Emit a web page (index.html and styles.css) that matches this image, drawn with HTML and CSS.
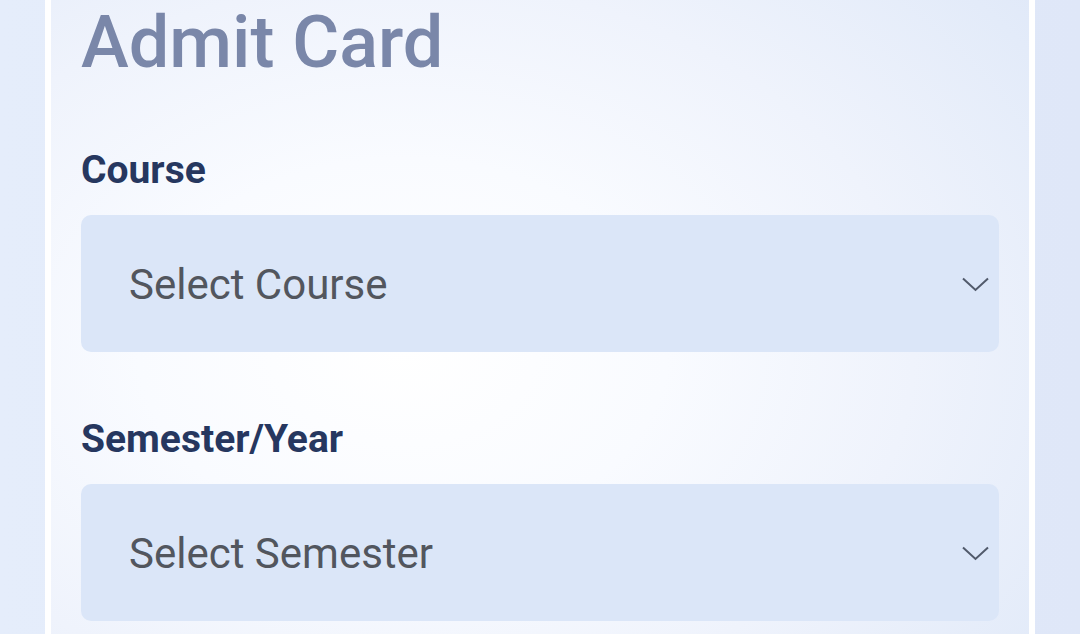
FILE: index.html
```html
<!DOCTYPE html>
<html lang="en">
<head>
<meta charset="utf-8">
<title>Admit Card</title>
<link rel="stylesheet" href="styles.css">
</head>
<body>
<main class="card">
  <h1 class="title">Admit Card</h1>
  <div class="field">
    <label class="label">Course</label>
    <div class="select">
      <span class="placeholder">Select Course</span>
      <svg class="chevron" width="27" height="15" viewBox="0 0 27 15"><path d="M1 1.5 L13.5 13 L26 1.5" fill="none" stroke="#515a6b" stroke-width="2"/></svg>
    </div>
  </div>
  <div class="field">
    <label class="label">Semester/Year</label>
    <div class="select">
      <span class="placeholder">Select Semester</span>
      <svg class="chevron" width="27" height="15" viewBox="0 0 27 15"><path d="M1 1.5 L13.5 13 L26 1.5" fill="none" stroke="#515a6b" stroke-width="2"/></svg>
    </div>
  </div>
</main>
</body>
</html>
```

FILE: styles.css
```css
* { box-sizing: border-box; }
html, body { margin: 0; padding: 0; }
body {
  background: linear-gradient(90deg, #e5edfb 0%, #dfe7f8 100%);
  font-family: Roboto, "Noto Sans", Arial, sans-serif;
  height: 634px;
  overflow: hidden;
}
.card {
  margin: 0 45px;
  height: 634px;
  border-left: 6px solid #ffffff;
  border-right: 6px solid #ffffff;
  background: radial-gradient(ellipse 90% 100% at 36% 55%, #ffffff 0%, #f9fbff 30%, #eff3fc 58%, #e3ebf9 85%, #dde6f8 100%);
  padding: 7px 30px 0 30px;
}
.title {
  margin: 0;
  font-size: 72px;
  line-height: 72px;
  font-weight: 500;
  color: #7a87a9;
}
.field {
  display: flex;
  flex-direction: column;
}
.title + .field { margin-top: 72px; }
.field + .field { margin-top: 68px; }
.label {
  font-size: 39px;
  line-height: 39px;
  font-weight: 700;
  color: #26375f;
  margin-bottom: 25px;
}
.select {
  height: 137px;
  width: 918px;
  background: #dbe6f8;
  border-radius: 10px;
  display: flex;
  align-items: center;
  justify-content: space-between;
  padding: 1px 10px 0 48px;
}
.placeholder {
  font-size: 42px;
  color: #52565e;
}
.chevron { display: block; }
```
